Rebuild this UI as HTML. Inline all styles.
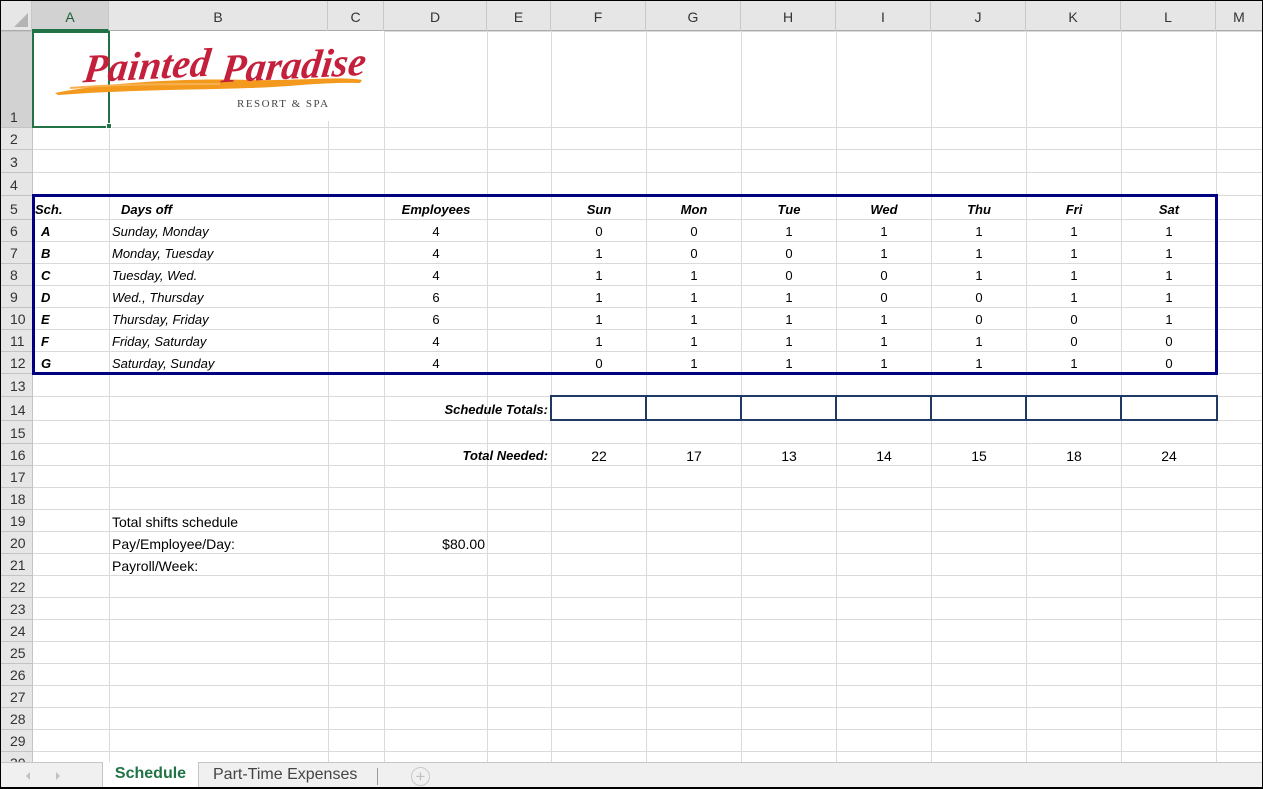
<!DOCTYPE html>
<html><head><meta charset="utf-8"><style>
*{margin:0;padding:0;box-sizing:border-box}
body{width:1263px;height:789px;overflow:hidden;background:#fff;font-family:"Liberation Sans",Arial,sans-serif;position:relative}
#hdr{position:absolute;left:0;top:0;width:1263px;height:31px;background:#e6e6e6;border-bottom:1px solid #ababab}
#hdr div{position:absolute;top:0;height:31px;line-height:34px;text-align:center;font-size:14px;color:#333;border-right:1px solid #c8c8c8}
table{position:absolute;left:0;top:31px;width:1263px;border-collapse:collapse;table-layout:fixed}
td{border:1px solid #dadada;padding:0}
th{background:#e6e6e6;border:1px solid #c3c3c3;font-weight:normal;font-size:14px;color:#333;text-align:left;padding-left:9px;vertical-align:bottom;line-height:20px}
.t{position:absolute;font-size:13px;line-height:16px;color:#000;white-space:nowrap;margin-top:1px}
.c{text-align:center;width:80px;margin-left:-40px}
.bi{font-weight:bold;font-style:italic}
.i{font-style:italic}
#tabs{position:absolute;left:0;top:762px;width:1263px;height:27px;background:#f0f0f0;border-top:1px solid #c6c6c6}
</style></head><body>
<div id="hdr">
<div style="left:0;width:32px;"><svg width="32" height="31" style="position:absolute;left:0;top:0"><polygon points="14,27 28,27 28,13" fill="#b4b4b4"/></svg></div>
<div style="left:32px;width:77px;background:#d2d2d2;border-bottom:2px solid #217346;color:#1e5e38">A</div>
<div style="left:109px;width:219px">B</div>
<div style="left:328px;width:56px">C</div>
<div style="left:384px;width:103px">D</div>
<div style="left:487px;width:64px">E</div>
<div style="left:551px;width:95px">F</div>
<div style="left:646px;width:95px">G</div>
<div style="left:741px;width:95px">H</div>
<div style="left:836px;width:95px">I</div>
<div style="left:931px;width:95px">J</div>
<div style="left:1026px;width:95px">K</div>
<div style="left:1121px;width:95px">L</div>
<div style="left:1216px;width:47px">M</div>
</div>
<table>
<colgroup><col style="width:32px"><col style="width:77px"><col style="width:219px"><col style="width:56px"><col style="width:103px"><col style="width:64px"><col style="width:95px"><col style="width:95px"><col style="width:95px"><col style="width:95px"><col style="width:95px"><col style="width:95px"><col style="width:95px"><col style="width:47px"></colgroup>
<tr style="height:96px"><th style="background:#d2d2d2">1</th><td></td><td></td><td></td><td></td><td></td><td></td><td></td><td></td><td></td><td></td><td></td><td></td><td></td></tr>
<tr style="height:22px"><th>2</th><td></td><td></td><td></td><td></td><td></td><td></td><td></td><td></td><td></td><td></td><td></td><td></td><td></td></tr>
<tr style="height:23px"><th>3</th><td></td><td></td><td></td><td></td><td></td><td></td><td></td><td></td><td></td><td></td><td></td><td></td><td></td></tr>
<tr style="height:23px"><th>4</th><td></td><td></td><td></td><td></td><td></td><td></td><td></td><td></td><td></td><td></td><td></td><td></td><td></td></tr>
<tr style="height:24px"><th>5</th><td></td><td></td><td></td><td></td><td></td><td></td><td></td><td></td><td></td><td></td><td></td><td></td><td></td></tr>
<tr style="height:22px"><th>6</th><td></td><td></td><td></td><td></td><td></td><td></td><td></td><td></td><td></td><td></td><td></td><td></td><td></td></tr>
<tr style="height:22px"><th>7</th><td></td><td></td><td></td><td></td><td></td><td></td><td></td><td></td><td></td><td></td><td></td><td></td><td></td></tr>
<tr style="height:22px"><th>8</th><td></td><td></td><td></td><td></td><td></td><td></td><td></td><td></td><td></td><td></td><td></td><td></td><td></td></tr>
<tr style="height:22px"><th>9</th><td></td><td></td><td></td><td></td><td></td><td></td><td></td><td></td><td></td><td></td><td></td><td></td><td></td></tr>
<tr style="height:22px"><th>10</th><td></td><td></td><td></td><td></td><td></td><td></td><td></td><td></td><td></td><td></td><td></td><td></td><td></td></tr>
<tr style="height:22px"><th>11</th><td></td><td></td><td></td><td></td><td></td><td></td><td></td><td></td><td></td><td></td><td></td><td></td><td></td></tr>
<tr style="height:22px"><th>12</th><td></td><td></td><td></td><td></td><td></td><td></td><td></td><td></td><td></td><td></td><td></td><td></td><td></td></tr>
<tr style="height:23px"><th>13</th><td></td><td></td><td></td><td></td><td></td><td></td><td></td><td></td><td></td><td></td><td></td><td></td><td></td></tr>
<tr style="height:24px"><th>14</th><td></td><td></td><td></td><td></td><td></td><td></td><td></td><td></td><td></td><td></td><td></td><td></td><td></td></tr>
<tr style="height:23px"><th>15</th><td></td><td></td><td></td><td></td><td></td><td></td><td></td><td></td><td></td><td></td><td></td><td></td><td></td></tr>
<tr style="height:22px"><th>16</th><td></td><td></td><td></td><td></td><td></td><td></td><td></td><td></td><td></td><td></td><td></td><td></td><td></td></tr>
<tr style="height:22px"><th>17</th><td></td><td></td><td></td><td></td><td></td><td></td><td></td><td></td><td></td><td></td><td></td><td></td><td></td></tr>
<tr style="height:22px"><th>18</th><td></td><td></td><td></td><td></td><td></td><td></td><td></td><td></td><td></td><td></td><td></td><td></td><td></td></tr>
<tr style="height:22px"><th>19</th><td></td><td></td><td></td><td></td><td></td><td></td><td></td><td></td><td></td><td></td><td></td><td></td><td></td></tr>
<tr style="height:22px"><th>20</th><td></td><td></td><td></td><td></td><td></td><td></td><td></td><td></td><td></td><td></td><td></td><td></td><td></td></tr>
<tr style="height:22px"><th>21</th><td></td><td></td><td></td><td></td><td></td><td></td><td></td><td></td><td></td><td></td><td></td><td></td><td></td></tr>
<tr style="height:22px"><th>22</th><td></td><td></td><td></td><td></td><td></td><td></td><td></td><td></td><td></td><td></td><td></td><td></td><td></td></tr>
<tr style="height:22px"><th>23</th><td></td><td></td><td></td><td></td><td></td><td></td><td></td><td></td><td></td><td></td><td></td><td></td><td></td></tr>
<tr style="height:22px"><th>24</th><td></td><td></td><td></td><td></td><td></td><td></td><td></td><td></td><td></td><td></td><td></td><td></td><td></td></tr>
<tr style="height:22px"><th>25</th><td></td><td></td><td></td><td></td><td></td><td></td><td></td><td></td><td></td><td></td><td></td><td></td><td></td></tr>
<tr style="height:22px"><th>26</th><td></td><td></td><td></td><td></td><td></td><td></td><td></td><td></td><td></td><td></td><td></td><td></td><td></td></tr>
<tr style="height:22px"><th>27</th><td></td><td></td><td></td><td></td><td></td><td></td><td></td><td></td><td></td><td></td><td></td><td></td><td></td></tr>
<tr style="height:22px"><th>28</th><td></td><td></td><td></td><td></td><td></td><td></td><td></td><td></td><td></td><td></td><td></td><td></td><td></td></tr>
<tr style="height:22px"><th>29</th><td></td><td></td><td></td><td></td><td></td><td></td><td></td><td></td><td></td><td></td><td></td><td></td><td></td></tr>
<tr style="height:22px"><th>30</th><td></td><td></td><td></td><td></td><td></td><td></td><td></td><td></td><td></td><td></td><td></td><td></td><td></td></tr>
</table>

<div style="position:absolute;left:33px;top:31px;width:351px;height:90px;background:#fff"></div>
<div style="position:absolute;left:32px;top:31px;width:78px;height:97px;border:2px solid #217346"></div>
<div style="position:absolute;left:106px;top:123px;width:6px;height:6px;background:#217346;border:1px solid #fff"></div>
<svg style="position:absolute;left:50px;top:38px" width="320" height="75">
<path d="M5,55 C60,44 140,40 200,42 C250,43 290,38 312,42 L310,45 C270,44 240,49 200,50 C140,52 70,52 8,57 Z" fill="#f39a1e"/>
<path d="M20,50 C70,46 120,46 170,46" stroke="#f7b150" stroke-width="2" fill="none"/>
<text x="40" y="44" font-family="'Liberation Serif',serif" font-style="italic" font-weight="bold" font-size="40" fill="#c41f3b" transform="rotate(-3 40 44) skewX(-10)">Painted</text>
<text x="178" y="44" font-family="'Liberation Serif',serif" font-style="italic" font-weight="bold" font-size="40" fill="#c41f3b" transform="rotate(-3 178 44) skewX(-10)">Paradise</text>
<text x="187" y="69" font-family="'Liberation Serif',serif" font-size="11" letter-spacing="1.5" fill="#444">RESORT &amp; SPA</text>
</svg>

<div style="position:absolute;left:32px;top:194px;width:1186px;height:181px;border:3px solid #000080"></div>
<div style="position:absolute;left:550px;top:395px;width:668px;height:26px;border:2px solid #1f3864"></div>
<div style="position:absolute;left:645px;top:395px;width:2px;height:26px;background:#1f3864"></div>
<div style="position:absolute;left:740px;top:395px;width:2px;height:26px;background:#1f3864"></div>
<div style="position:absolute;left:835px;top:395px;width:2px;height:26px;background:#1f3864"></div>
<div style="position:absolute;left:930px;top:395px;width:2px;height:26px;background:#1f3864"></div>
<div style="position:absolute;left:1025px;top:395px;width:2px;height:26px;background:#1f3864"></div>
<div style="position:absolute;left:1120px;top:395px;width:2px;height:26px;background:#1f3864"></div>

<div class="t bi" style="left:35px;top:201px">Sch.</div>
<div class="t bi" style="left:121px;top:201px">Days off</div>
<div class="t bi c" style="left:436px;top:201px">Employees</div>
<div class="t bi c" style="left:599px;top:201px">Sun</div>
<div class="t bi c" style="left:694px;top:201px">Mon</div>
<div class="t bi c" style="left:789px;top:201px">Tue</div>
<div class="t bi c" style="left:884px;top:201px">Wed</div>
<div class="t bi c" style="left:979px;top:201px">Thu</div>
<div class="t bi c" style="left:1074px;top:201px">Fri</div>
<div class="t bi c" style="left:1169px;top:201px">Sat</div>

<div class="t bi" style="left:41px;top:223px">A</div><div class="t i" style="left:112px;top:223px">Sunday, Monday</div><div class="t c" style="left:436px;top:223px">4</div>
<div class="t c" style="left:599px;top:223px">0</div><div class="t c" style="left:694px;top:223px">0</div><div class="t c" style="left:789px;top:223px">1</div><div class="t c" style="left:884px;top:223px">1</div><div class="t c" style="left:979px;top:223px">1</div><div class="t c" style="left:1074px;top:223px">1</div><div class="t c" style="left:1169px;top:223px">1</div>

<div class="t bi" style="left:41px;top:245px">B</div><div class="t i" style="left:112px;top:245px">Monday, Tuesday</div><div class="t c" style="left:436px;top:245px">4</div>
<div class="t c" style="left:599px;top:245px">1</div><div class="t c" style="left:694px;top:245px">0</div><div class="t c" style="left:789px;top:245px">0</div><div class="t c" style="left:884px;top:245px">1</div><div class="t c" style="left:979px;top:245px">1</div><div class="t c" style="left:1074px;top:245px">1</div><div class="t c" style="left:1169px;top:245px">1</div>

<div class="t bi" style="left:41px;top:267px">C</div><div class="t i" style="left:112px;top:267px">Tuesday, Wed.</div><div class="t c" style="left:436px;top:267px">4</div>
<div class="t c" style="left:599px;top:267px">1</div><div class="t c" style="left:694px;top:267px">1</div><div class="t c" style="left:789px;top:267px">0</div><div class="t c" style="left:884px;top:267px">0</div><div class="t c" style="left:979px;top:267px">1</div><div class="t c" style="left:1074px;top:267px">1</div><div class="t c" style="left:1169px;top:267px">1</div>

<div class="t bi" style="left:41px;top:289px">D</div><div class="t i" style="left:112px;top:289px">Wed., Thursday</div><div class="t c" style="left:436px;top:289px">6</div>
<div class="t c" style="left:599px;top:289px">1</div><div class="t c" style="left:694px;top:289px">1</div><div class="t c" style="left:789px;top:289px">1</div><div class="t c" style="left:884px;top:289px">0</div><div class="t c" style="left:979px;top:289px">0</div><div class="t c" style="left:1074px;top:289px">1</div><div class="t c" style="left:1169px;top:289px">1</div>

<div class="t bi" style="left:41px;top:311px">E</div><div class="t i" style="left:112px;top:311px">Thursday, Friday</div><div class="t c" style="left:436px;top:311px">6</div>
<div class="t c" style="left:599px;top:311px">1</div><div class="t c" style="left:694px;top:311px">1</div><div class="t c" style="left:789px;top:311px">1</div><div class="t c" style="left:884px;top:311px">1</div><div class="t c" style="left:979px;top:311px">0</div><div class="t c" style="left:1074px;top:311px">0</div><div class="t c" style="left:1169px;top:311px">1</div>

<div class="t bi" style="left:41px;top:333px">F</div><div class="t i" style="left:112px;top:333px">Friday, Saturday</div><div class="t c" style="left:436px;top:333px">4</div>
<div class="t c" style="left:599px;top:333px">1</div><div class="t c" style="left:694px;top:333px">1</div><div class="t c" style="left:789px;top:333px">1</div><div class="t c" style="left:884px;top:333px">1</div><div class="t c" style="left:979px;top:333px">1</div><div class="t c" style="left:1074px;top:333px">0</div><div class="t c" style="left:1169px;top:333px">0</div>

<div class="t bi" style="left:41px;top:355px">G</div><div class="t i" style="left:112px;top:355px">Saturday, Sunday</div><div class="t c" style="left:436px;top:355px">4</div>
<div class="t c" style="left:599px;top:355px">0</div><div class="t c" style="left:694px;top:355px">1</div><div class="t c" style="left:789px;top:355px">1</div><div class="t c" style="left:884px;top:355px">1</div><div class="t c" style="left:979px;top:355px">1</div><div class="t c" style="left:1074px;top:355px">1</div><div class="t c" style="left:1169px;top:355px">0</div>

<div class="t bi" style="right:715px;top:401px">Schedule Totals:</div>
<div class="t bi" style="right:715px;top:447px">Total Needed:</div>
<div class="t c" style="left:599px;top:447px;font-size:14px">22</div><div class="t c" style="left:694px;top:447px;font-size:14px">17</div><div class="t c" style="left:789px;top:447px;font-size:14px">13</div><div class="t c" style="left:884px;top:447px;font-size:14px">14</div><div class="t c" style="left:979px;top:447px;font-size:14px">15</div><div class="t c" style="left:1074px;top:447px;font-size:14px">18</div><div class="t c" style="left:1169px;top:447px;font-size:14px">24</div>

<div class="t" style="left:112px;top:513px;font-size:14px">Total shifts schedule</div>
<div class="t" style="left:112px;top:535px;font-size:14px">Pay/Employee/Day:</div>
<div class="t" style="right:778px;top:535px;font-size:14px">$80.00</div>
<div class="t" style="left:112px;top:557px;font-size:14px">Payroll/Week:</div>

<div id="tabs">
<div style="position:absolute;left:26px;top:9px;width:0;height:0;border-top:4px solid transparent;border-bottom:4px solid transparent;border-right:4px solid #c0c0c0"></div>
<div style="position:absolute;left:56px;top:9px;width:0;height:0;border-top:4px solid transparent;border-bottom:4px solid transparent;border-left:4px solid #c0c0c0"></div>
<div style="position:absolute;left:102px;top:-1px;width:97px;height:27px;background:#fff;border-left:1px solid #c6c6c6;border-right:1px solid #c6c6c6;border-bottom:2px solid #217346;text-align:center;font-weight:bold;font-size:16px;line-height:24px;color:#217346">Schedule</div>
<div style="position:absolute;left:213px;top:0;font-size:16px;line-height:23px;color:#444">Part-Time Expenses</div>
<div style="position:absolute;left:377px;top:5px;width:1px;height:17px;background:#999"></div>
<div style="position:absolute;left:411px;top:4px;width:19px;height:19px;border:1px solid #c8c8c8;border-radius:50%;color:#c0c0c0;text-align:center;line-height:17px;font-size:17px">+</div>
</div>
<div style="position:absolute;left:0;top:0;width:1263px;height:789px;border:1px solid #000;border-bottom:2px solid #000;pointer-events:none"></div>
</body></html>
